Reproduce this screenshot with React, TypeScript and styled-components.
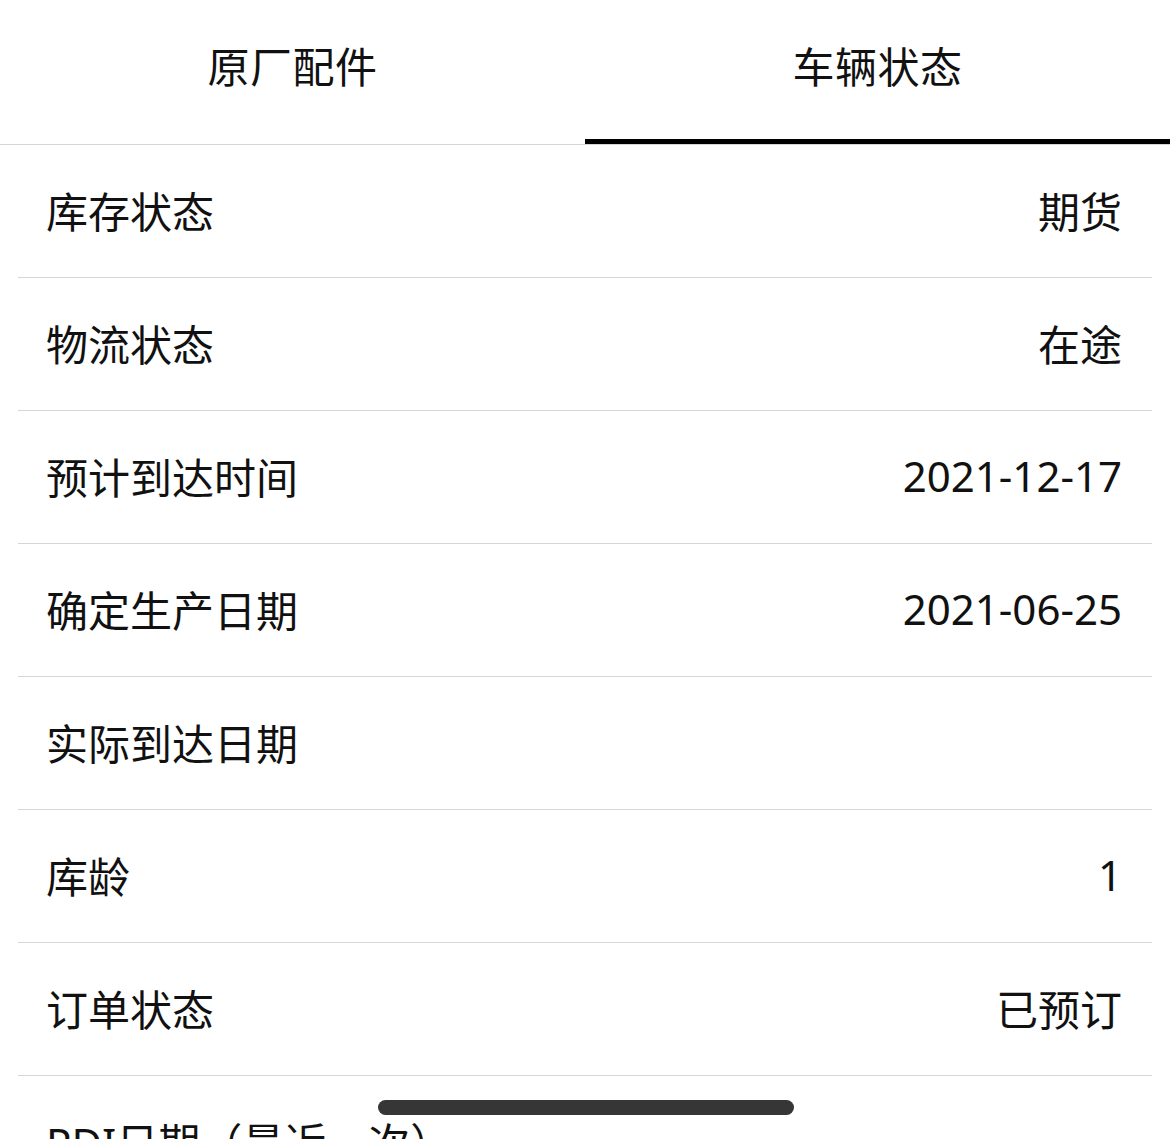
import { useState } from 'react';
import styled, { createGlobalStyle } from 'styled-components';

type StatusItem = {
  label: string;
  value?: string;
};

const TABS = ['原厂配件', '车辆状态'];

const ITEMS: StatusItem[] = [
  { label: '库存状态', value: '期货' },
  { label: '物流状态', value: '在途' },
  { label: '预计到达时间', value: '2021-12-17' },
  { label: '确定生产日期', value: '2021-06-25' },
  { label: '实际到达日期' },
  { label: '库龄', value: '1' },
  { label: '订单状态', value: '已预订' },
  { label: 'PDI日期（最近一次）' },
];

const GlobalStyle = createGlobalStyle`
  html, body {
    margin: 0;
    padding: 0;
    background: #fff;
    height: 100%;
    overflow: hidden;
  }
  body {
    font-family: "Noto Sans", "Noto Sans CJK SC", sans-serif;
    color: #111;
  }
`;

export default function App() {
  const [active, setActive] = useState(1);

  return (
    <StyledPage>
      <GlobalStyle />
      <StyledTabBar>
        {TABS.map((tab, i) => (
          <StyledTab key={tab} onClick={() => setActive(i)}>
            <StyledTabLabel>{tab}</StyledTabLabel>
            <StyledIndicator $active={i === active} />
          </StyledTab>
        ))}
      </StyledTabBar>

      <StyledList>
        {ITEMS.map((item) => (
          <StyledRow key={item.label}>
            <StyledLabel>{item.label}</StyledLabel>
            {item.value && <StyledValue>{item.value}</StyledValue>}
          </StyledRow>
        ))}
      </StyledList>

      <StyledHomeIndicator />
    </StyledPage>
  );
}

const StyledPage = styled.div`
  position: relative;
  width: 1170px;
  height: 1139px;
  overflow: hidden;
  background: #fff;
`;

const StyledTabBar = styled.div`
  display: flex;
  height: 144px;
  border-bottom: 1px solid #d6d6d6;
`;

const StyledTab = styled.div`
  flex: 1;
  display: flex;
  flex-direction: column;
  cursor: pointer;
`;

const StyledTabLabel = styled.div`
  flex: 1;
  display: flex;
  align-items: center;
  justify-content: center;
  padding-bottom: 11px;
  font-size: 42px;
  color: #111;
  letter-spacing: 0.5px;
`;

const StyledIndicator = styled.div<{ $active: boolean }>`
  height: 5px;
  background: ${({ $active }) => ($active ? '#000' : 'transparent')};
`;

const StyledList = styled.div`
  display: flex;
  flex-direction: column;
  padding: 0 18px;
`;

const StyledRow = styled.div`
  display: flex;
  align-items: center;
  justify-content: space-between;
  box-sizing: border-box;
  height: 133px;
  padding: 0 30px 4px 28px;
  border-bottom: 1px solid #d6d6d6;
  font-size: 42px;
`;

const StyledLabel = styled.span`
  color: #111;
`;

const StyledValue = styled.span`
  color: #111;
`;

const StyledHomeIndicator = styled.div`
  position: absolute;
  left: 378px;
  top: 1100px;
  width: 416px;
  height: 15px;
  border-radius: 8px;
  background: #363636;
`;
